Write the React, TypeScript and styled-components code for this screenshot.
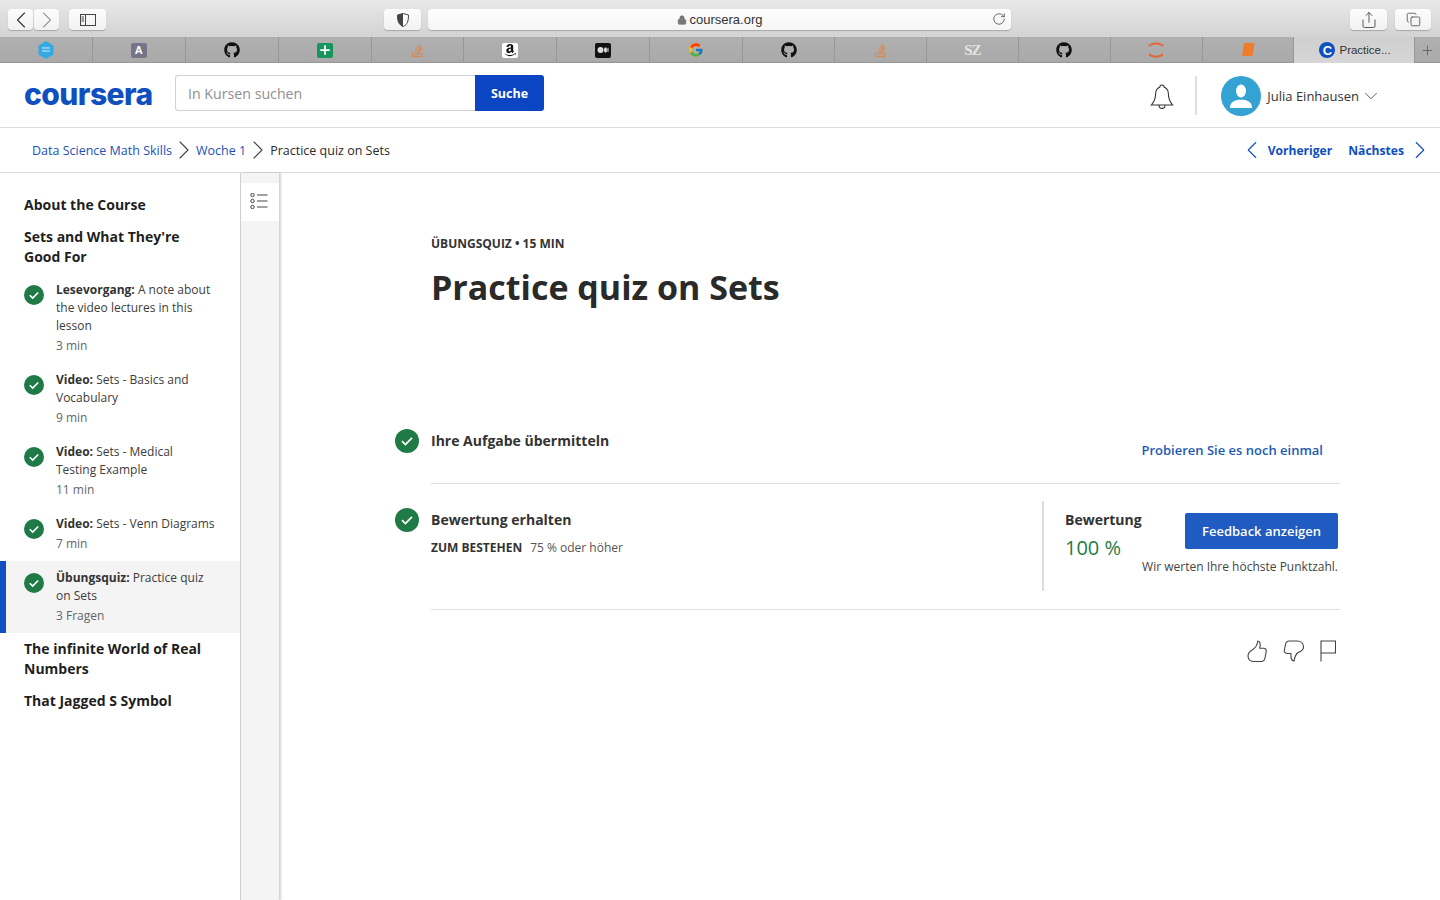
import styled, { createGlobalStyle } from "styled-components";
import { ChevronDown, ChevronLeft, ChevronRight, Plus, RotateCw, Share, Copy, Lock } from "lucide-react";
import { FaGithub, FaStackOverflow, FaAmazon } from "react-icons/fa";
import { FcGoogle } from "react-icons/fc";

const GlobalStyle = createGlobalStyle`
    html, body {
        margin: 0;
        padding: 0;
        height: 100%;
        background: #fff;
        overflow: hidden;
    }
    * { box-sizing: border-box; }
    body {
        font-family: "Open Sans", "Liberation Sans", sans-serif;
        color: #1f1f1f;
    }
`;

const BLUE = "#0f4fc0";
const GREEN = "#1f7a46";

const Page = styled.div`
    width: 1440px;
    height: 900px;
    display: flex;
    flex-direction: column;
    overflow: hidden;
`;

/* browser chrome */
const Toolbar = styled.div`
    height: 37px;
    flex: none;
    display: flex;
    align-items: flex-start;
    padding: 9px 9px 0 8px;
    background: linear-gradient(#e8e8e8, #d3d3d3);
`;

const ChromeButton = styled.div<{ $w: number; $ml?: number }>`
    width: ${({ $w }) => $w}px;
    height: 21px;
    margin-left: ${({ $ml }) => $ml ?? 0}px;
    flex: none;
    display: flex;
    align-items: center;
    justify-content: center;
    background: linear-gradient(#fdfdfd, #f1f1f1);
    border-radius: 4px;
    box-shadow: 0 1px 1px rgba(0, 0, 0, 0.22);
    color: #3c3c3c;
    svg { flex: none; }
`;

const AddressBar = styled.div`
    width: 583px;
    height: 21px;
    margin-left: 7px;
    flex: none;
    display: flex;
    align-items: center;
    justify-content: center;
    gap: 3px;
    position: relative;
    background: linear-gradient(#fefefe, #f5f5f5);
    border-radius: 4px;
    box-shadow: 0 1px 1px rgba(0, 0, 0, 0.22);
    font-family: "Liberation Sans", sans-serif;
    font-size: 13px;
    color: #333;
    svg.reload {
        position: absolute;
        right: 5px;
        top: 3px;
    }
`;

const TabBar = styled.div`
    height: 26px;
    flex: none;
    display: flex;
    background: linear-gradient(#b0b0b0, #a9a9a9);
    box-shadow: inset 0 -1px 0 #979797;
`;

const Tab = styled.div<{ $w: number }>`
    width: ${({ $w }) => $w}px;
    flex: none;
    display: flex;
    align-items: center;
    justify-content: center;
    border-right: 1px solid #979797;
`;

const ActiveTab = styled.div`
    width: 120px;
    flex: none;
    display: flex;
    align-items: center;
    padding-left: 25px;
    gap: 4px;
    background: linear-gradient(#cfcfcf, #d6d6d6);
    font-family: "Liberation Sans", sans-serif;
    font-size: 11.5px;
    color: #333;
`;

const NewTab = styled.div`
    flex: 1;
    display: flex;
    align-items: center;
    justify-content: center;
    border-left: 1px solid #979797;
    color: #555;
`;

const SquareIcon = styled.div<{ $bg: string; $color?: string }>`
    width: 16px;
    height: 15px;
    border-radius: 2px;
    background: ${({ $bg }) => $bg};
    color: ${({ $color }) => $color ?? "#fff"};
    display: flex;
    align-items: center;
    justify-content: center;
    font-family: "Liberation Sans", sans-serif;
    font-size: 11px;
    font-weight: 700;
`;

const SzMark = styled.span`
    font-family: "Liberation Serif", serif;
    font-weight: 700;
    font-size: 15px;
    color: #e4e4e4;
    letter-spacing: -1px;
`;

const CircleC = styled.div`
    width: 16px;
    height: 16px;
    border-radius: 50%;
    background: #0f4fc0;
    color: #fff;
    display: flex;
    align-items: center;
    justify-content: center;
    font-family: "Liberation Sans", sans-serif;
    font-weight: 700;
    font-size: 13px;
`;

/* coursera header */
const Header = styled.header`
    height: 65px;
    flex: none;
    display: flex;
    align-items: center;
    padding: 0 0 0 24px;
    border-bottom: 1px solid #dcdcdc;
`;

const Logo = styled.div`
    width: 128px;
    margin-top: -2px;
    font-family: "Inter", sans-serif;
    font-weight: 800;
    font-size: 30px;
    letter-spacing: -0.55px;
    line-height: 1;
    color: #0f4fc0;
`;

const SearchForm = styled.div`
    display: flex;
    height: 36px;
    margin: -4px 0 0 23px;
`;

const SearchInput = styled.div`
    width: 300px;
    display: flex;
    align-items: center;
    padding-left: 12px;
    border: 1px solid #d0d0d8;
    border-right: 0;
    border-radius: 3px 0 0 3px;
    font-size: 14.2px;
    color: #8f8f8f;
`;

const SearchButton = styled.div`
    width: 69px;
    display: flex;
    align-items: center;
    justify-content: center;
    background: #0b45c4;
    border-radius: 0 3px 3px 0;
    color: #fff;
    font-size: 12.5px;
    font-weight: 700;
`;

const HeaderRight = styled.div`
    margin-left: auto;
    display: flex;
    align-items: center;
    height: 100%;
    padding-top: 1px;
`;

const BellWrap = styled.div`
    display: flex;
    margin-top: 2px;
`;

const Divider = styled.div`
    width: 2px;
    height: 39px;
    background: #dedede;
    margin: 0 24px 0 20px;
`;

const Avatar = styled.div`
    width: 40px;
    height: 40px;
    border-radius: 50%;
    background: #35a2d4;
    display: flex;
    align-items: center;
    justify-content: center;
`;

const UserName = styled.div`
    margin-left: 6px;
    font-size: 13px;
    color: #333;
`;

const UserChevron = styled(ChevronDown)`
    margin: 1px 58px 0 1px;
    color: #444;
`;

/* breadcrumb */
const CrumbBar = styled.nav`
    height: 45px;
    flex: none;
    display: flex;
    align-items: center;
    padding: 0 5px 0 32px;
    border-bottom: 1px solid #dcdcdc;
    font-size: 12.5px;
`;

const Crumb = styled.span`
    color: #1d50b8;
`;

const CrumbCurrent = styled.span`
    color: #2a2a2a;
`;

const CrumbSeparator = styled(ChevronRight)`
    margin: 0 -4px;
    color: #444;
`;

const PagerLink = styled.span<{ $ml?: number }>`
    margin-left: ${({ $ml }) => $ml ?? 0}px;
    color: #0f4fc0;
    font-weight: 700;
    font-size: 12.1px;
`;

const Pager = styled.div`
    margin-left: auto;
    display: flex;
    align-items: center;
    color: #0f4fc0;
    gap: 1px;
`;

const Body = styled.div`
    flex: 1;
    display: flex;
    min-height: 0;
`;

/* left sidebar */
const Sidebar = styled.aside`
    width: 241px;
    flex: none;
    padding-top: 22px;
    border-right: 1px solid #cfcfcf;
`;

const SectionTitle = styled.div<{ $before?: number; $after?: number }>`
    padding: 0 24px;
    margin-top: ${({ $before }) => $before ?? 0}px;
    margin-bottom: ${({ $after }) => $after ?? 12}px;
    font-size: 14px;
    line-height: 20px;
    font-weight: 700;
    color: #1f1f1f;
`;

const LessonRow = styled.div<{ $active?: boolean }>`
    display: flex;
    padding: 8px 24px 8px ${({ $active }) => ($active ? 18 : 24)}px;
    background: ${({ $active }) => ($active ? "#f4f4f4" : "transparent")};
    border-left: ${({ $active }) => ($active ? `6px solid ${BLUE}` : "0")};
`;

const LessonIcon = styled.div`
    width: 32px;
    flex: none;
    padding-top: 4px;
`;

const LessonText = styled.div`
    font-size: 12px;
    line-height: 18px;
    color: #3c3c3c;
    b {
        font-weight: 700;
        color: #333;
    }
`;

const LessonMeta = styled.div`
    margin-top: 2px;
    font-size: 12px;
    line-height: 18px;
    color: #666;
`;

const Rail = styled.div`
    width: 38px;
    flex: none;
    padding-top: 10px;
    background: #f4f4f4;
    box-shadow: 2px 0 2px rgba(0, 0, 0, 0.18);
`;

const RailButton = styled.div`
    height: 38px;
    padding: 0 0 2px 9px;
    background: #fff;
    display: flex;
    align-items: center;
`;

/* main */
const Main = styled.main`
    flex: 1;
    padding: 62px 100px 0 116px;
`;

const Intro = styled.div`
    padding-left: 36px;
    margin-bottom: 119px;
`;

const Eyebrow = styled.div`
    font-size: 12px;
    line-height: 18px;
    font-weight: 700;
    color: #333;
`;

const Title = styled.h1`
    margin: 11px 0 0;
    font-size: 34px;
    line-height: 46px;
    font-weight: 700;
    color: #2a2a2a;
`;

const StepRow = styled.div<{ $h: number; $pt: number }>`
    display: grid;
    grid-template-columns: 24px 1fr;
    column-gap: 12px;
    padding-top: ${({ $pt }) => $pt}px;
    height: ${({ $h }) => $h}px;
`;

const StepContent = styled.div`
    display: flex;
    justify-content: space-between;
    height: 100%;
    border-bottom: 1px solid #dedede;
`;

const StepTitle = styled.div`
    font-size: 14px;
    line-height: 24px;
    font-weight: 700;
    color: #333;
`;

const RetryLink = styled.div`
    margin: 9px 17px 0 0;
    line-height: 24px;
    font-size: 13px;
    font-weight: 600;
    color: #1d5ab5;
`;

const PassLine = styled.div`
    margin-top: 7px;
    font-size: 12px;
    line-height: 18px;
    color: #555;
    b {
        font-weight: 700;
        color: #333;
        margin-right: 8px;
    }
`;

const GradePanel = styled.div`
    width: 296px;
    height: 90px;
    margin-top: -7px;
    margin-right: 2px;
    padding: 7px 0 0 21px;
    border-left: 2px solid #dedede;
    display: flex;
    justify-content: space-between;
`;

const GradeLabel = styled.div`
    font-size: 14px;
    line-height: 24px;
    font-weight: 700;
    color: #333;
`;

const GradeValue = styled.div`
    margin-top: 2px;
    font-size: 20px;
    line-height: 28px;
    color: ${GREEN};
`;

const GradeActions = styled.div`
    display: flex;
    flex-direction: column;
    align-items: flex-end;
    gap: 9px;
    margin-top: 5px;
`;

const FeedbackButton = styled.div`
    width: 153px;
    height: 36px;
    display: flex;
    align-items: center;
    justify-content: center;
    background: #1f5bc0;
    border-radius: 2px;
    color: #fff;
    font-size: 13px;
    font-weight: 600;
`;

const GradeNote = styled.div`
    font-size: 12px;
    line-height: 18px;
    color: #444;
    white-space: nowrap;
`;

const Reactions = styled.div`
    display: flex;
    justify-content: flex-end;
    align-items: center;
    gap: 15px;
    padding: 29px 0 0 0;
    margin-right: 4px;
    color: #444;
`;

const Check = () => (
    <svg width="20" height="20" viewBox="0 0 20 20">
        <circle cx="10" cy="10" r="10" fill={GREEN} />
        <path d="M5.8 10.2l2.9 2.9 5.5-5.6" fill="none" stroke="#fff" strokeWidth="1.6" />
    </svg>
);

const BigCheck = () => (
    <svg width="24" height="24" viewBox="0 0 24 24">
        <circle cx="12" cy="12" r="12" fill={GREEN} />
        <path d="M7 12.2l3.4 3.4 6.6-6.8" fill="none" stroke="#fff" strokeWidth="1.7" />
    </svg>
);

const Bell = () => (
    <svg width="26" height="28" viewBox="0 0 26 28" fill="none" stroke="#333" strokeWidth="1.1">
        <path d="M13 2c-1.4 0-2.2 1-2.3 2.3C8 5.3 6.6 7.800 6.600 11c0 5-1.200 7.500-4.300 11h21.400c-3.100-3.500-4.300-6-4.300-11 0-3.200-1.400-5.700-4.100-6.700C15.200 3 14.400 2 13 2z" />
        <path d="M10 22c0 2 1.300 3.400 3 3.400s3-1.400 3-3.400" />
    </svg>
);

const ThumbUp = () => (
    <svg width="22" height="24" viewBox="0 0 22 24" fill="none" stroke="#444" strokeWidth="1.1">
        <path d="M7 10.500c2.500-1.800 4.300-4.500 4.800-8.500 2.200.3 3 2.600 2 7.300h4c1.700 0 2.700 1.400 2.400 3l-1.200 6.700c-.4 2.100-1.800 3.500-3.800 3.500H8c-3 0-6-1.500-6-5.500 0-3.500 2-5 5-6.500z" />
    </svg>
);

const ThumbDown = () => (
    <svg width="22" height="24" viewBox="0 0 22 24" fill="none" stroke="#444" strokeWidth="1.1">
        <path d="M15 13.500c-1.500 1-3 3-4 8.500-2.200-.3-3.600-2.500-3-7.500H4.500C2.500 14.500 1 13.200 1.300 11.500L2.500 5.500C2.900 3.400 4.300 2 6.300 2H14c3.500 0 6.500 2 6.500 6 0 3-2.500 4.500-5.500 5.500z" />
    </svg>
);

const FlagIcon = () => (
    <svg width="16" height="22" viewBox="0 0 16 22" fill="none" stroke="#444" strokeWidth="1.1">
        <path d="M1 21.500V1h14.500v12H1" />
    </svg>
);

const ListIcon = () => (
    <svg width="18" height="16" viewBox="0 0 18 16" fill="none" stroke="#444" strokeWidth="1">
        <circle cx="2.500" cy="2" r="1.700" />
        <circle cx="2.500" cy="8" r="1.700" />
        <circle cx="2.500" cy="14" r="1.700" />
        <path d="M7 2h10.500M7 8h10.500M7 14h10.500" />
    </svg>
);

const SidebarToggleIcon = () => (
    <svg width="16" height="12" viewBox="0 0 16 12" fill="none" stroke="#444" strokeWidth="1">
        <rect x="0.500" y="0.500" width="15" height="11" />
        <path d="M5.500 0.500v11" />
        <path d="M1.500 3h2.500M1.500 5h2.500M1.500 7h2.500" />
    </svg>
);

const ShieldIcon = () => (
    <svg width="12" height="14" viewBox="0 0 12 14">
        <path d="M6 .5L11.500 2c0 6-1 9.500-5.500 11.500C1.500 11.500.5 8 .5 2z" fill="#fff" stroke="#444" />
        <path d="M6 .5L.5 2c0 6 1 9.500 5.500 11.500z" fill="#444" />
    </svg>
);

const HexIcon = () => (
    <svg width="16" height="18" viewBox="0 0 16 18">
        <path d="M8 0l7.500 4.500v9L8 18 .5 13.500v-9z" fill="#35a9e4" />
        <path d="M4 7h8M4 10h8" stroke="#d6eefa" strokeWidth="1" />
    </svg>
);

const ArcIcon = () => (
    <svg width="16" height="18" viewBox="0 0 16 18" fill="none" stroke="#e2693a" strokeWidth="2">
        <path d="M1 5c3-3.500 11-3.500 14 0M1 13c3 3.500 11 3.500 14 0" />
    </svg>
);

const BookIcon = () => (
    <svg width="14" height="16" viewBox="0 0 14 16">
        <path d="M3 1h10.500l-2 13H1z" fill="#ee7d2b" />
    </svg>
);

const MediumDots = () => (
    <svg width="12" height="8" viewBox="0 0 12 8" fill="#ddd">
        <circle cx="3.500" cy="4" r="3" />
        <ellipse cx="8.500" cy="4" rx="1.500" ry="2.800" />
        <ellipse cx="11" cy="4" rx=".6" ry="2.400" />
    </svg>
);

const lessons = [
    { kind: "Lesevorgang:", text: "A note about the video lectures in this lesson", meta: "3 min" },
    { kind: "Video:", text: "Sets - Basics and Vocabulary", meta: "9 min" },
    { kind: "Video:", text: "Sets - Medical Testing Example", meta: "11 min" },
    { kind: "Video:", text: "Sets - Venn Diagrams", meta: "7 min" },
    { kind: "Übungsquiz:", text: "Practice quiz on Sets", meta: "3 Fragen", active: true },
];

const WIDE_TAB = 92.9;
const NARROW_TAB = 91.9;

export default function App() {
    return (
        <Page>
            <GlobalStyle />
            <Toolbar>
                <ChromeButton $w={25}><ChevronLeft size={28} strokeWidth={1} /></ChromeButton>
                <ChromeButton $w={25} $ml={1}><ChevronRight size={28} strokeWidth={0.9} color="#777" /></ChromeButton>
                <ChromeButton $w={37} $ml={10}><SidebarToggleIcon /></ChromeButton>
                <ChromeButton $w={37} $ml={278}><ShieldIcon /></ChromeButton>
                <AddressBar>
                    <Lock size={10} fill="#777" color="#777" />
                    coursera.org
                    <RotateCw className="reload" size={14} strokeWidth={1.2} color="#333" />
                </AddressBar>
                <ChromeButton $w={37} $ml={339}><Share size={18} strokeWidth={1.1} /></ChromeButton>
                <ChromeButton $w={36} $ml={8}><Copy size={15} strokeWidth={1.2} /></ChromeButton>
            </Toolbar>
            <TabBar>
                <Tab $w={WIDE_TAB}><HexIcon /></Tab>
                <Tab $w={WIDE_TAB}><SquareIcon $bg="#75758a">A</SquareIcon></Tab>
                <Tab $w={WIDE_TAB}><FaGithub size={16} color="#111" /></Tab>
                <Tab $w={WIDE_TAB}><SquareIcon $bg="#17955a"><Plus size={14} strokeWidth={3} /></SquareIcon></Tab>
                <Tab $w={WIDE_TAB}><FaStackOverflow size={15} color="#d98650" /></Tab>
                <Tab $w={WIDE_TAB}><SquareIcon $bg="#fff" $color="#111"><FaAmazon size={14} /></SquareIcon></Tab>
                <Tab $w={WIDE_TAB}><SquareIcon $bg="#111"><MediumDots /></SquareIcon></Tab>
                <Tab $w={WIDE_TAB}><FcGoogle size={16} /></Tab>
                <Tab $w={NARROW_TAB}><FaGithub size={16} color="#111" /></Tab>
                <Tab $w={NARROW_TAB}><FaStackOverflow size={15} color="#d98650" /></Tab>
                <Tab $w={NARROW_TAB}><SzMark>SZ</SzMark></Tab>
                <Tab $w={NARROW_TAB}><FaGithub size={16} color="#111" /></Tab>
                <Tab $w={NARROW_TAB}><ArcIcon /></Tab>
                <Tab $w={NARROW_TAB}><BookIcon /></Tab>
                <ActiveTab><CircleC>C</CircleC>Practice...</ActiveTab>
                <NewTab><Plus size={15} strokeWidth={1.2} /></NewTab>
            </TabBar>
            <Header>
                <Logo>coursera</Logo>
                <SearchForm>
                    <SearchInput>In Kursen suchen</SearchInput>
                    <SearchButton>Suche</SearchButton>
                </SearchForm>
                <HeaderRight>
                    <BellWrap><Bell /></BellWrap>
                    <Divider />
                    <Avatar>
                        <svg width="26" height="26" viewBox="0 0 26 26" fill="#fff">
                            <ellipse cx="13" cy="8" rx="5" ry="6.500" />
                            <path d="M2 25c0-5 3-7 7-8 2-.5 6-.5 8 0 4 1 7 3 7 8z" />
                        </svg>
                    </Avatar>
                    <UserName>Julia Einhausen</UserName>
                    <UserChevron size={22} strokeWidth={0.9} />
                </HeaderRight>
            </Header>
            <CrumbBar>
                <Crumb>Data Science Math Skills</Crumb>
                <CrumbSeparator size={32} strokeWidth={0.8} />
                <Crumb>Woche 1</Crumb>
                <CrumbSeparator size={32} strokeWidth={0.8} />
                <CrumbCurrent>Practice quiz on Sets</CrumbCurrent>
                <Pager>
                    <ChevronLeft size={30} strokeWidth={0.9} />
                    <PagerLink>Vorheriger</PagerLink>
                    <PagerLink $ml={15}>Nächstes</PagerLink>
                    <ChevronRight size={30} strokeWidth={0.9} />
                </Pager>
            </CrumbBar>
            <Body>
                <Sidebar>
                    <SectionTitle>About the Course</SectionTitle>
                    <SectionTitle $after={6}>Sets and What They're Good For</SectionTitle>
                    {lessons.map((lesson) => (
                        <LessonRow key={lesson.text} $active={lesson.active}>
                            <LessonIcon><Check /></LessonIcon>
                            <LessonText>
                                <b>{lesson.kind}</b> {lesson.text}
                                <LessonMeta>{lesson.meta}</LessonMeta>
                            </LessonText>
                        </LessonRow>
                    ))}
                    <SectionTitle $before={6}>The infinite World of Real Numbers</SectionTitle>
                    <SectionTitle>That Jagged S Symbol</SectionTitle>
                </Sidebar>
                <Rail>
                    <RailButton><ListIcon /></RailButton>
                </Rail>
                <Main>
                    <Intro>
                        <Eyebrow>ÜBUNGSQUIZ • 15 MIN</Eyebrow>
                        <Title>Practice quiz on Sets</Title>
                    </Intro>
                    <StepRow $pt={0} $h={55}>
                        <BigCheck />
                        <StepContent>
                            <StepTitle>Ihre Aufgabe übermitteln</StepTitle>
                            <RetryLink>Probieren Sie es noch einmal</RetryLink>
                        </StepContent>
                    </StepRow>
                    <StepRow $pt={24} $h={126}>
                        <BigCheck />
                        <StepContent>
                            <div>
                                <StepTitle>Bewertung erhalten</StepTitle>
                                <PassLine><b>ZUM BESTEHEN</b>75 % oder höher</PassLine>
                            </div>
                            <GradePanel>
                                <div>
                                    <GradeLabel>Bewertung</GradeLabel>
                                    <GradeValue>100 %</GradeValue>
                                </div>
                                <GradeActions>
                                    <FeedbackButton>Feedback anzeigen</FeedbackButton>
                                    <GradeNote>Wir werten Ihre höchste Punktzahl.</GradeNote>
                                </GradeActions>
                            </GradePanel>
                        </StepContent>
                    </StepRow>
                    <Reactions>
                        <ThumbUp />
                        <ThumbDown />
                        <FlagIcon />
                    </Reactions>
                </Main>
            </Body>
        </Page>
    );
}
